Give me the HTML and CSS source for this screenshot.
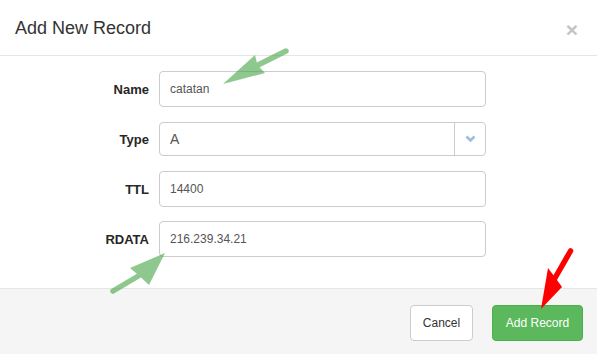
FILE: index.html
```html
<!DOCTYPE html>
<html>
<head>
<meta charset="utf-8">
<link rel="stylesheet" href="styles.css">
</head>
<body>
<div class="modal">
  <div class="modal-header">
    <h4 class="modal-title">Add New Record</h4>
    <span class="close">×</span>
  </div>
  <div class="modal-body">
    <label class="field-label">Name</label>
    <input class="field" type="text" value="catatan">
    <label class="field-label">Type</label>
    <div class="select">
      <span class="select-value">A</span>
      <span class="select-btn">
        <svg width="11" height="8" viewBox="0 0 11 8"><polyline points="1.5,1.5 5.5,5.5 9.5,1.5" fill="none" stroke="#9dbddd" stroke-width="2.6"/></svg>
      </span>
    </div>
    <label class="field-label">TTL</label>
    <input class="field" type="text" value="14400">
    <label class="field-label">RDATA</label>
    <input class="field" type="text" value="216.239.34.21">
  </div>
  <div class="modal-footer">
    <button class="btn btn-default">Cancel</button>
    <button class="btn btn-success">Add Record</button>
  </div>
  <svg class="annotations" width="597" height="354" viewBox="0 0 597 354">
    <g fill="rgb(70,165,70)" stroke="rgb(70,165,70)" opacity="0.6">
      <line x1="286" y1="51" x2="258" y2="65" stroke-width="5.5" stroke-linecap="round"/>
      <polygon points="223,84 255,55 257.5,65 265,73" stroke="none"/>
      <line x1="113" y1="291" x2="140" y2="275" stroke-width="5.5" stroke-linecap="round"/>
      <polygon points="165,253 130,268 139.5,276 149,285" stroke="none"/>
    </g>
    <g fill="#ff0000" stroke="#ff0000">
      <line x1="570.5" y1="251" x2="555" y2="278" stroke-width="5.5" stroke-linecap="round"/>
      <polygon points="541,309 548,268 555.5,278 562,287" stroke="none"/>
    </g>
  </svg>
</div>
</body>
</html>
```

FILE: styles.css
```css
html, body {
  margin: 0;
  padding: 0;
  background: #ffffff;
}

body {
  font-family: "Liberation Sans", Arial, Helvetica, sans-serif;
  color: #333333;
}

.modal {
  position: relative;
  width: 597px;
  height: 354px;
  display: flex;
  flex-direction: column;
  background: #ffffff;
  overflow: hidden;
}

.modal-header {
  height: 55px;
  border-bottom: 1px solid #e5e5e5;
  display: flex;
  align-items: center;
  justify-content: space-between;
  padding: 0 19px 0 15px;
}

.modal-title {
  margin: 0;
  font-size: 18px;
  font-weight: normal;
  line-height: 20px;
  color: #333333;
}

.close {
  font-size: 21px;
  font-weight: bold;
  line-height: 1;
  color: #c4c4c4;
  margin-top: 3px;
}

.modal-body {
  flex: 1;
  display: grid;
  grid-template-columns: 149px 327px;
  grid-auto-rows: 36px;
  column-gap: 10px;
  row-gap: 14px;
  align-items: center;
  align-content: start;
  padding: 15px 0 0 0;
}

.field-label {
  font-size: 13px;
  font-weight: bold;
  text-align: right;
  color: #262626;
}

.field {
  box-sizing: border-box;
  height: 36px;
  width: 100%;
  margin: 0;
  border: 1px solid #cccccc;
  border-radius: 4px;
  padding: 0 10px;
  font-family: inherit;
  font-size: 12px;
  color: #555555;
  background: #ffffff;
  outline: none;
}

.select {
  box-sizing: border-box;
  height: 34px;
  border: 1px solid #cccccc;
  border-radius: 4px;
  display: flex;
  align-items: stretch;
  background: #ffffff;
}

.select-value {
  flex: 1;
  display: flex;
  align-items: center;
  padding-left: 10px;
  font-size: 14px;
  color: #555555;
}

.select-btn {
  width: 30px;
  border-left: 1px solid #cccccc;
  display: flex;
  align-items: center;
  justify-content: center;
}

.modal-footer {
  height: 66px;
  box-sizing: border-box;
  border-top: 1px solid #e5e5e5;
  background: #f5f5f5;
  display: flex;
  justify-content: flex-end;
  align-items: flex-start;
  gap: 19px;
  padding: 16px 14px 0 0;
}

.btn {
  box-sizing: border-box;
  height: 36px;
  border-radius: 4px;
  font-family: inherit;
  font-size: 12px;
  margin: 0;
  cursor: pointer;
}

.btn-default {
  width: 63px;
  background: #ffffff;
  border: 1px solid #cccccc;
  color: #333333;
}

.btn-success {
  width: 91px;
  background: #5cb85c;
  border: 1px solid #4cae4c;
  color: #ffffff;
}

.annotations {
  position: absolute;
  top: 0;
  left: 0;
  pointer-events: none;
}
```
